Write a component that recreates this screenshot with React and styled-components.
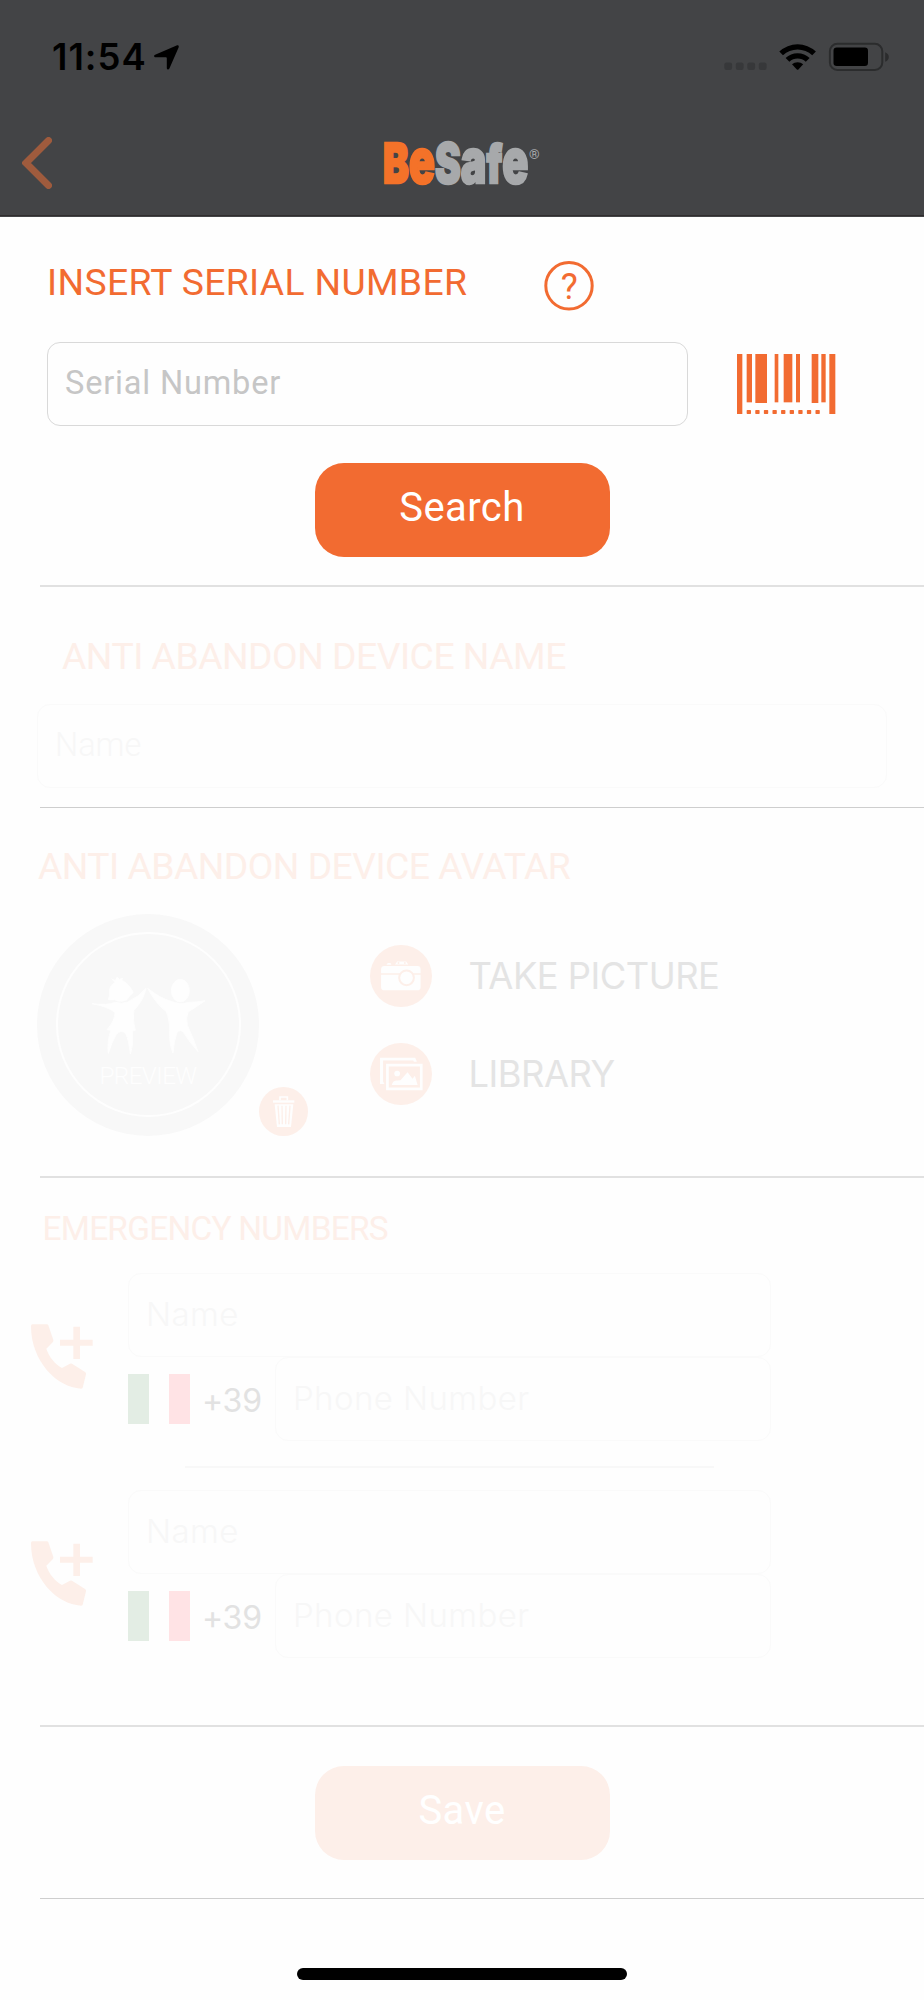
import React from "react";
import styled, { createGlobalStyle } from "styled-components";

const ORANGE = "#f26b31";
const PALE_ORANGE = "#fdefe9";

const GlobalStyle = createGlobalStyle`
  * {
    box-sizing: border-box;
  }

  body {
    margin: 0;
    background-color: #fefefe;
    font-family: Roboto, "Liberation Sans", sans-serif;
  }
`;

const Screen = styled.div`
  display: flex;
  flex-direction: column;
  width: 924px;
  height: 2000px;
  overflow: hidden;
  background-color: #fefefe;
`;

const Header = styled.header`
  height: 217px;
  background-color: #434446;
  border-bottom: 1px solid #434446;
  box-shadow: inset 0 -1px #302d2e;
`;

const StatusBar = styled.div`
  display: flex;
  align-items: center;
  height: 114px;
  padding: 0 35px 0 52px;
`;

const Time = styled.span`
  width: 102px;
  font-family: Inter, sans-serif;
  font-size: 36.5px;
  font-weight: 600;
  letter-spacing: 1px;
  color: #000000;
`;

const StatusIcons = styled.div`
  display: flex;
  align-items: center;
  margin-left: auto;
`;

const NavBar = styled.div`
  display: grid;
  grid-template-columns: 1fr 160px 1fr;
  align-items: center;
  height: 98px;
  padding-left: 22px;
  padding-right: 22px;
`;

const Section = styled.section`
  padding-top: ${({ top }) => top}px;
  padding-bottom: ${({ bottom }) => bottom}px;
`;

const Divider = styled.div`
  flex: none;
  height: ${({ thin }) => (thin ? "1px" : "2px")};
  margin-left: 40px;
  background-color: ${({ thin }) => (thin ? "#cecece" : "#e1e1e1")};
`;

const Title = styled.h2`
  margin: 0 0 0 ${({ left }) => left}px;
  font-size: ${({ small }) => (small ? "33.4px" : "37.3px")};
  font-weight: 400;
  line-height: ${({ small }) => (small ? "40px" : "43px")};
  letter-spacing: ${({ spacing }) => spacing || 0}px;
  white-space: nowrap;
  color: ${({ faded }) => (faded ? PALE_ORANGE : ORANGE)};
`;

const EmergencyTitle = styled(Title)`
  margin-bottom: 24px;
`;

const TitleRow = styled.div`
  display: grid;
  grid-template-columns: 497px 50px;
  align-items: start;
  height: 50px;
  margin-left: 47px;
`;

const SerialRow = styled.div`
  display: flex;
  align-items: center;
  margin: 31px 0 37px 47px;
`;

const BarcodeSlot = styled.div`
  height: 60px;
  margin-left: 48.6px;
`;

const Field = styled.div`
  display: flex;
  align-items: center;
  width: ${({ width }) => width}px;
  height: 84px;
  padding: 0 0 3px 17px;
  border: 1px solid ${({ faded }) => (faded ? "#fafafa" : "#d9d9d9")};
  border-radius: 13px;
  font-size: 32.6px;
  font-weight: ${({ faded }) => (faded ? 300 : 400)};
  letter-spacing: ${({ faded }) => (faded ? 0 : 0.8)}px;
  color: ${({ faded }) => (faded ? "#f7f7f7" : "#c6c6c6")};
`;

const NameField = styled(Field)`
  margin: 26px 0 0 37px;
`;

const ContactField = styled(Field)`
  font-family: Inter, sans-serif;
  font-size: 33px;
  letter-spacing: 0.4px;
`;

const Button = styled.button`
  display: block;
  width: 295px;
  height: 94px;
  margin: 0 auto;
  padding: 0 0 5px;
  border: none;
  border-radius: 29px;
  background-color: ${({ faded }) => (faded ? PALE_ORANGE : ORANGE)};
  font-family: inherit;
  font-size: 40px;
  letter-spacing: 0.4px;
  color: #ffffff;
`;

const AvatarRow = styled.div`
  display: grid;
  grid-template-columns: 222px 49px auto;
  margin: 25.5px 0 0 37px;
  height: 222px;
`;

const Avatar = styled.div`
  display: grid;
  place-items: center;
  width: 222px;
  height: 222px;
  border-radius: 50%;
  background-color: #f8f8f8;
`;

const AvatarRing = styled.div`
  display: flex;
  flex-direction: column;
  align-items: center;
  width: 185px;
  height: 185px;
  padding-top: 43px;
  border: 2px solid #fefefe;
  border-radius: 50%;
`;

const AvatarLabel = styled.span`
  margin-top: 8px;
  font-size: 24.3px;
  font-weight: 300;
  line-height: 28px;
  letter-spacing: -0.6px;
  color: #fefefe;
`;

const TrashSlot = styled.div`
  align-self: end;
  height: 49px;
`;

const Actions = styled.div`
  display: flex;
  flex-direction: column;
  gap: 36.4px;
  padding: 31.6px 0 0 61.5px;
`;

const Action = styled.div`
  display: flex;
  align-items: center;
  gap: 37px;
  height: 62px;
  font-family: Inter, sans-serif;
  font-size: 36.3px;
  letter-spacing: -0.5px;
  color: #e4e4e4;
`;

const Contact = styled.div`
  display: grid;
  grid-template-columns: 98px 643px;
  height: 168px;
  margin-left: 30px;
`;

const PhoneIconSlot = styled.div`
  padding: 51px 0 0 0.6px;
`;

const PhoneRow = styled.div`
  display: flex;
  align-items: center;
`;

const Flag = styled.div`
  width: 62px;
  height: 50px;
  background: linear-gradient(
    to right,
    #e3ede4 0 33.3%,
    #fefefe 33.3% 66.6%,
    #ffe3e5 66.6% 100%
  );
`;

const Prefix = styled.span`
  width: 85px;
  padding: 2px 0 0 12px;
  font-family: Inter, sans-serif;
  font-size: 32px;
  letter-spacing: -0.2px;
  color: #e2e2e2;
`;

const ContactDivider = styled.div`
  width: 529px;
  height: 2px;
  margin: 25px 0 22px 185px;
  background-color: #f8f8f8;
`;

const HomeIndicator = styled.div`
  width: 330px;
  height: 12px;
  margin: 69px auto 0;
  border-radius: 6px;
  background-color: #000000;
`;

const LocationIcon = () => (
  <svg width="25" height="25" viewBox="0 0 25 25">
    <path d="M22.6 0.4C24.2 -0.2 25.2 0.9 24.6 2.4L15.4 23.4C14.7 25 12.9 24.8 12.8 23V13.2C12.8 12.6 12.5 12.3 11.9 12.3H1.8C0 12.2 -0.6 10.5 1.1 9.7Z" />
  </svg>
);

const StatusGlyphs = () => (
  <svg width="165" height="30" viewBox="724 42 165 30">
    <g fill="#37383a">
      <rect x="724.3" y="62.4" width="7.8" height="7.6" rx="2.2" />
      <rect x="735.8" y="62.4" width="7.8" height="7.6" rx="2.2" />
      <rect x="747.3" y="62.4" width="7.8" height="7.6" rx="2.2" />
      <rect x="758.8" y="62.4" width="7.8" height="7.6" rx="2.2" />
    </g>
    <path d="M779.3 51.6a26.5 26.5 0 0 1 36.6 0l-3.7 3.7a21 21 0 0 0-29.2 0z" />
    <path d="M785.6 58a17.3 17.3 0 0 1 24 0l-3.8 3.8a12 12 0 0 0-16.4 0z" />
    <path d="M792 64.3a8.3 8.3 0 0 1 11.2 0l-4.6 4.9q-1 1-2 0z" />
    <rect
      x="829.9"
      y="43.8"
      width="52.4"
      height="26.2"
      rx="7.5"
      fill="none"
      stroke="#2b2c2d"
      strokeWidth="2"
    />
    <rect x="833.5" y="47.6" width="34.5" height="18.4" rx="3.2" />
    <path d="M885.2 52.2q3.6 1.6 3.6 4.8t-3.6 4.8z" fill="#2b2c2d" />
  </svg>
);

const BackIcon = () => (
  <svg width="30" height="52" viewBox="0 0 30 52">
    <path
      d="M26.5 3.5L4 26L26.5 48.5"
      fill="none"
      stroke="#9f5b3d"
      strokeWidth="7"
      strokeLinecap="round"
      strokeLinejoin="miter"
    />
  </svg>
);

const Logo = () => (
  <svg width="160" height="90" viewBox="382 118 160 90">
    <text
      transform="translate(383 182.8) scale(0.705 1)"
      fontFamily="Inter, sans-serif"
      fontWeight="900"
      fontSize="55"
      strokeWidth="2.4"
    >
      <tspan fill="#f47229" stroke="#f47229">
        B<tspan fontSize="61">e</tspan>
      </tspan>
      <tspan fill="#a7a9ab" stroke="#a7a9ab">
        S<tspan fontSize="61">a</tspan>
        <tspan fontSize="53">f</tspan>
        <tspan fontSize="61">e</tspan>
      </tspan>
    </text>
    <text x="529" y="158.5" fontFamily="Roboto, sans-serif" fontSize="13.5" fill="#a7a9ab">
      ®
    </text>
  </svg>
);

const HelpIcon = () => (
  <svg width="50" height="50" viewBox="0 0 50 50">
    <circle cx="25" cy="24.8" r="23.2" fill="none" stroke={ORANGE} strokeWidth="3" />
    <text
      x="25.2"
      y="37.8"
      textAnchor="middle"
      fontFamily="Roboto, sans-serif"
      fontSize="36"
      fill={ORANGE}
    >
      ?
    </text>
  </svg>
);

const bars = [
  [0, 16, 180],
  [29, 16, 145],
  [55, 35, 147],
  [113, 11, 145],
  [140, 26, 145],
  [177, 12, 145],
  [224, 20, 147],
  [253, 13, 145],
  [277, 18, 180],
];

const BarcodeIcon = () => (
  <svg width="99" height="60" viewBox="0 0 297 180" fill={ORANGE}>
    {bars.map(([x, width, height]) => (
      <rect key={x} x={x} y="0" width={width} height={height} />
    ))}
    {[0, 1, 2, 3, 4, 5, 6, 7, 8].map((dot) => (
      <rect key={dot} x={29 + dot * 25.8} y="168" width="13" height="12" rx="2" />
    ))}
  </svg>
);

const KidsIcon = () => (
  <svg
    width="115"
    height="77"
    viewBox="272 440 345 231"
    fill="#fefefe"
    stroke="#fefefe"
    strokeWidth="3"
  >
    <path d="M334 446L345 451L350 441L357 447L367 444L364 450Q384 458 399 486Q385 498 380 508Q360 518 343 508L324 508Q330 494 327 482Q330 462 345 456Z" />
    <path d="M275 520Q320 526 345 516Q364 522 382 515Q415 500 437 474Q430 510 401 540Q396 565 405 600L396 602Q400 640 390 671Q386 630 376 610Q362 596 348 612Q332 640 324 669Q320 630 332 600L320 598Q345 570 344 546Q320 528 275 520Z" />
    <ellipse cx="540" cy="481" rx="27" ry="34" />
    <path d="M442 474Q480 504 512 513Q540 524 566 516Q590 516 614 511Q588 530 563 545Q556 560 561 585Q580 625 593 664Q568 636 549 606Q540 596 530 606Q520 635 518 668Q506 640 508 600Q508 565 497 543Q466 520 442 474Z" />
  </svg>
);

const TrashIcon = () => (
  <svg width="49" height="49" viewBox="777 768 147 147">
    <circle cx="850.5" cy="841.5" r="73.5" fill={PALE_ORANGE} />
    <path d="M840 808V798H862V808" fill="none" stroke="#fefefe" strokeWidth="5" />
    <rect x="819" y="808" width="64" height="7" fill="#fefefe" />
    <path d="M824 820H880L873 888H831Z" fill="#fefefe" />
    <path
      d="M834 824L838 880M846 824L847 880M858 824L857 880M870 824L866 880"
      stroke={PALE_ORANGE}
      strokeWidth="4"
    />
  </svg>
);

const CameraIcon = () => (
  <svg width="62" height="62" viewBox="1109 345 185 185">
    <circle cx="1201.5" cy="437.5" r="92.5" fill={PALE_ORANGE} />
    <g fill="#fefefe">
      <path d="M1158 404L1162 399H1170L1173 404Z" />
      <path d="M1184 403L1190 394H1217L1223 403Z" />
      <path d="M1152 408H1251Q1260 408 1260 418V429H1142V418Q1142 408 1152 408Z" />
      <path d="M1142 434H1260V470Q1260 480 1250 480H1152Q1142 480 1142 470Z" />
    </g>
    <circle cx="1194" cy="399" r="3" fill={PALE_ORANGE} />
    <circle cx="1213" cy="399" r="3" fill={PALE_ORANGE} />
    <circle cx="1218" cy="443" r="22" fill="#fefefe" stroke={PALE_ORANGE} strokeWidth="6" />
  </svg>
);

const LibraryIcon = () => (
  <svg width="62" height="62" viewBox="1109 640 185 185">
    <circle cx="1201.5" cy="732.5" r="92.5" fill={PALE_ORANGE} />
    <path d="M1139 684H1244L1249 696H1240L1238 692H1148V755L1152 762H1139Z" fill="#fefefe" />
    <rect x="1161" y="706" width="101" height="71" fill="none" stroke="#fefefe" strokeWidth="8" />
    <circle cx="1190" cy="731" r="8.5" fill="#fefefe" />
    <path d="M1174 765Q1177 752 1190 752L1200 751L1221 727L1236 747L1243 738L1251 765Z" fill="#fefefe" />
  </svg>
);

const AddCallIcon = () => (
  <svg width="62" height="65" viewBox="92 433 186 195" fill={PALE_ORANGE}>
    <path d="M96 434H140Q143 434 144 437L159 481Q160 485 157 488L138 507C146 532 164 553 185 565L209 552Q212 551 215 552L254 577Q258 580 257 584L247 624Q246 627 242 627C170 624 92 545 92 440Q92 434 96 434Z" />
    <path d="M219 441H239V480H277V498H239V538H219V498H179V480H219Z" />
  </svg>
);

const EmergencyContact = () => (
  <Contact>
    <PhoneIconSlot>
      <AddCallIcon />
    </PhoneIconSlot>
    <div>
      <ContactField faded="true" width={643}>
        Name
      </ContactField>
      <PhoneRow>
        <Flag />
        <Prefix>+39</Prefix>
        <ContactField faded="true" width={496}>
          Phone Number
        </ContactField>
      </PhoneRow>
    </div>
  </Contact>
);

const App = () => {
  return (
    <Screen>
      <GlobalStyle />

      <Header>
        <StatusBar>
          <Time>11:54</Time>
          <LocationIcon />
          <StatusIcons>
            <StatusGlyphs />
          </StatusIcons>
        </StatusBar>
        <NavBar>
          <BackIcon />
          <Logo />
        </NavBar>
      </Header>

      <Section top={44} bottom={28}>
        <TitleRow>
          <Title left={0} spacing={0.33}>
            INSERT SERIAL NUMBER
          </Title>
          <HelpIcon />
        </TitleRow>
        <SerialRow>
          <Field width={641}>Serial Number</Field>
          <BarcodeSlot>
            <BarcodeIcon />
          </BarcodeSlot>
        </SerialRow>
        <Button>Search</Button>
      </Section>
      <Divider />

      <Section top={48} bottom={19}>
        <Title faded="true" left={62} spacing={-0.5}>
          ANTI ABANDON DEVICE NAME
        </Title>
        <NameField faded="true" width={850}>
          Name
        </NameField>
      </Section>
      <Divider thin="true" />

      <Section top={37} bottom={40.5}>
        <Title faded="true" left={38} spacing={-0.53}>
          ANTI ABANDON DEVICE AVATAR
        </Title>
        <AvatarRow>
          <Avatar>
            <AvatarRing>
              <KidsIcon />
              <AvatarLabel>PREVIEW</AvatarLabel>
            </AvatarRing>
          </Avatar>
          <TrashSlot>
            <TrashIcon />
          </TrashSlot>
          <Actions>
            <Action>
              <CameraIcon />
              TAKE PICTURE
            </Action>
            <Action>
              <LibraryIcon />
              LIBRARY
            </Action>
          </Actions>
        </AvatarRow>
      </Section>
      <Divider />

      <Section top={31} bottom={67}>
        <EmergencyTitle faded="true" small="true" left={42.5} spacing={-0.75}>
          EMERGENCY NUMBERS
        </EmergencyTitle>
        <EmergencyContact />
        <ContactDivider />
        <EmergencyContact />
      </Section>
      <Divider />

      <Section top={39} bottom={38}>
        <Button faded="true">Save</Button>
      </Section>
      <Divider thin="true" />

      <HomeIndicator />
    </Screen>
  );
};

export default App;
